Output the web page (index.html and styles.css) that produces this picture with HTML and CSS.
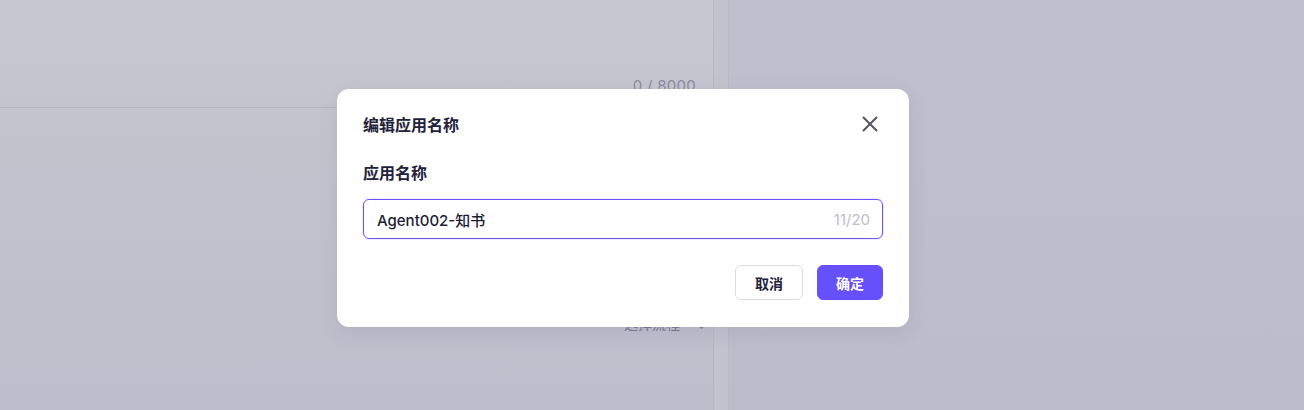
FILE: index.html
```html
<!DOCTYPE html>
<html lang="zh">
<head>
<meta charset="utf-8">
<link rel="stylesheet" href="styles.css">
</head>
<body>
<div class="page">
  <div class="left">
    <div class="editor">
      <span class="counter">0 / 8000</span>
    </div>
    <div class="lower">
      <span class="flow"><span class="tick">✓</span>选择流程<span class="caret">⌄</span></span>
    </div>
  </div>
  <div class="strip"></div>
  <div class="right"></div>
</div>

<div class="overlay">
  <div class="dialog">
    <div class="dialog-head">
      <span class="dialog-title">编辑应用名称</span>
      <svg class="close" width="18" height="18" viewBox="0 0 18 18">
        <path d="M2.5 2.5L15.5 15.5M15.5 2.5L2.5 15.5" stroke="#55555e" stroke-width="2" stroke-linecap="round"/>
      </svg>
    </div>
    <div class="field-label">应用名称</div>
    <div class="input">
      <span class="input-text">Agent002-知书</span>
      <span class="input-count">11/20</span>
    </div>
    <div class="actions">
      <button class="btn btn-default">取消</button>
      <button class="btn btn-primary">确定</button>
    </div>
  </div>
</div>
</body>
</html>
```

FILE: styles.css
```css
html, body {
  margin: 0;
  padding: 0;
  width: 1304px;
  height: 410px;
  overflow: hidden;
  font-family: Inter, "Noto Sans CJK SC", sans-serif;
}

.page {
  display: flex;
  height: 410px;
}

.left {
  width: 713px;
  border-right: 1px solid #b9b9c6;
  display: flex;
  flex-direction: column;
  background: linear-gradient(#c7c7d1, #bdbdcb);
}

.editor {
  height: 107px;
  border-bottom: 1px solid #b2b2c0;
  display: flex;
  justify-content: flex-end;
  align-items: flex-end;
  padding-right: 17px;
}

.counter {
  font-size: 15px;
  color: #8a8aa0;
  line-height: 20px;
  margin-bottom: 11px;
  letter-spacing: 0.3px;
}

.lower {
  flex: 1;
  display: flex;
  justify-content: flex-end;
  align-items: flex-start;
  padding-top: 205px;
  padding-right: 6px;
}

.flow {
  font-size: 14px;
  color: #7a7a92;
  display: flex;
  align-items: center;
}

.tick {
  font-size: 10px;
  margin-right: 4px;
}

.caret {
  margin-left: 16px;
}

.strip {
  width: 14px;
  border-right: 1px solid #b8b8c6;
  background: #c3c3cf;
}

.right {
  flex: 1;
  background: linear-gradient(#bfc0ce, #bcbdcb);
}

.overlay {
  position: absolute;
  left: 0;
  top: 0;
  width: 1304px;
  height: 410px;
  padding: 89px 0 0 337px;
  box-sizing: border-box;
}

.dialog {
  width: 572px;
  height: 238px;
  box-sizing: border-box;
  background: #ffffff;
  border-radius: 12px;
  padding: 23px 26px 0 26px;
  box-shadow: 0 6px 20px rgba(60, 60, 90, 0.10);
}

.dialog-head {
  display: flex;
  justify-content: space-between;
  align-items: center;
  height: 24px;
}

.dialog-title {
  font-size: 16px;
  font-weight: 600;
  color: #22223a;
}

.close {
  margin-right: 4px;
}

.field-label {
  margin-top: 26px;
  font-size: 16px;
  font-weight: 600;
  color: #22223a;
  line-height: 22px;
}

.input {
  margin-top: 15px;
  height: 40px;
  box-sizing: border-box;
  border: 1px solid #6a55f7;
  border-radius: 6px;
  box-shadow: 0 0 0 1px rgba(106, 85, 247, 0.12);
  display: flex;
  align-items: center;
  justify-content: space-between;
  padding: 0 12px 0 13px;
}

.input-text {
  font-size: 15px;
  font-weight: 500;
  color: #1d1d33;
}

.input-count {
  font-size: 15px;
  color: #bdbdc6;
}

.actions {
  margin-top: 26px;
  display: flex;
  justify-content: flex-end;
  gap: 14px;
}

.btn {
  height: 35px;
  border-radius: 6px;
  font-family: Inter, "Noto Sans CJK SC", sans-serif;
  font-size: 14px;
  font-weight: 600;
  padding: 0;
  cursor: pointer;
}

.btn-default {
  width: 68px;
  background: #ffffff;
  border: 1px solid #dcdce6;
  color: #22223a;
}

.btn-primary {
  width: 66px;
  background: #6550fb;
  border: 1px solid #6550fb;
  color: #ffffff;
}
```
